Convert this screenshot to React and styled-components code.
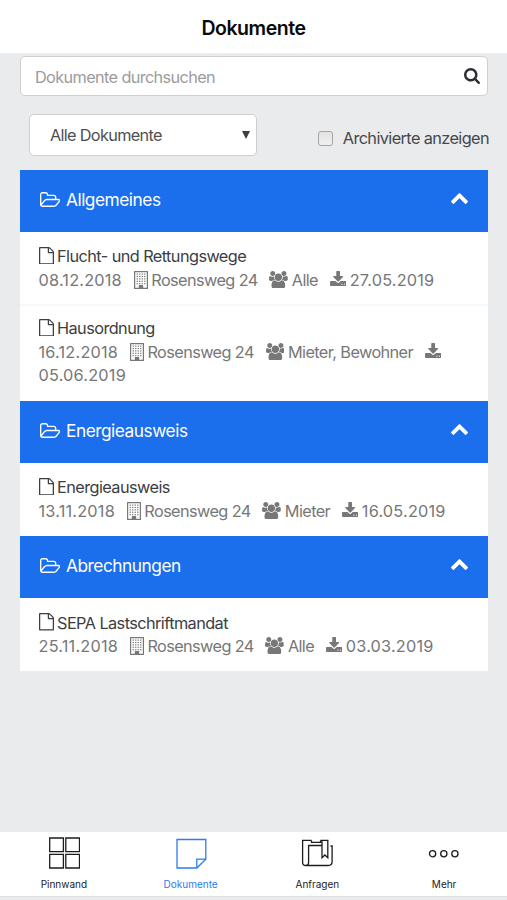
import React, { useState } from "react";
import styled, { createGlobalStyle } from "styled-components";

const groups = [
  {
    title: "Allgemeines",
    documents: [
      {
        title: "Flucht- und Rettungswege",
        created: "08.12.2018",
        building: "Rosensweg 24",
        audience: "Alle",
        downloaded: "27.05.2019"
      },
      {
        title: "Hausordnung",
        created: "16.12.2018",
        building: "Rosensweg 24",
        audience: "Mieter, Bewohner",
        downloaded: "05.06.2019"
      }
    ]
  },
  {
    title: "Energieausweis",
    documents: [
      {
        title: "Energieausweis",
        created: "13.11.2018",
        building: "Rosensweg 24",
        audience: "Mieter",
        downloaded: "16.05.2019"
      }
    ]
  },
  {
    title: "Abrechnungen",
    documents: [
      {
        title: "SEPA Lastschriftmandat",
        created: "25.11.2018",
        building: "Rosensweg 24",
        audience: "Alle",
        downloaded: "03.03.2019"
      }
    ]
  }
];

const SearchIcon = () => (
  <Glyph viewBox="64 128 1664 1664" $width={16} $height={16}>
    <path d="M1216 832q0-185-131.5-316.5t-316.5-131.5-316.5 131.5-131.5 316.5 131.5 316.5 316.5 131.5 316.5-131.5 131.5-316.5zm512 832q0 52-38 90t-90 38q-54 0-90-38l-343-342q-179 124-399 124-143 0-273.5-55.5t-225-150-150-225-55.5-273.5 55.5-273.5 150-225 225-150 273.5-55.5 273.5 55.5 225 150 150 225 55.5 273.5q0 220-124 399l343 343q37 37 37 90z" />
  </Glyph>
);

const FolderIcon = () => (
  <Glyph viewBox="64 128 1920 1408" $width={20.4} $height={15}>
    <path d="M1845 931q0-35-53-35h-1088q-40 0-85.5 21.5t-71.5 52.5l-294 363q-18 24-18 40 0 35 53 35h1088q40 0 86-22t71-53l294-363q18-22 18-39zm-1141-163h768v-160q0-40-28-68t-68-28h-576q-40 0-68-28t-28-68v-64q0-40-28-68t-68-28h-320q-40 0-68 28t-28 68v853l256-315q44-53 116-87.5t140-34.5zm1269 163q0 62-46 120l-295 363q-43 53-116 87.5t-140 34.5h-1088q-92 0-158-66t-66-158v-960q0-92 66-158t158-66h320q92 0 158 66t66 158v32h544q92 0 158 66t66 158v160h192q54 0 99 24.5t67 70.5q15 32 15 68z" />
  </Glyph>
);

const ChevronIcon = () => (
  <Glyph viewBox="90 480 1612 1036" $width={17} $height={11}>
    <path d="M1683 1331l-166 165q-19 19-45 19t-45-19l-531-531-531 531q-19 19-45 19t-45-19l-166-165q-19-19-19-45.5t19-45.5l742-741q19-19 45-19t45 19l742 741q19 19 19 45.5t-19 45.5z" />
  </Glyph>
);

const FileIcon = () => (
  <Glyph viewBox="128 0 1536 1792" $width={15} $height={17.5} $shift={-2}>
    <path d="M1596 380q28 28 48 76t20 88v1152q0 40-28 68t-68 28h-1344q-40 0-68-28t-28-68v-1600q0-40 28-68t68-28h896q40 0 88 20t76 48zm-444-244v376h376q-10-29-22-41l-313-313q-12-12-41-22zm384 1528v-1024h-416q-40 0-68-28t-28-68v-416h-768v1536h1280z" />
  </Glyph>
);

const BuildingIcon = () => (
  <Glyph viewBox="0 0 14 18" $width={14} $height={18} $shift={-3}>
    <path
      fillRule="evenodd"
      d="M.6 0h12.8q.6 0 .6.6v16.8q0 .6-.6.6H.6q-.6 0-.6-.6V.6Q0 0 .6 0zM1.2 1.2v15.6h3.6v-2.3q0-.4.4-.4h3.6q.4 0 .4.4v2.3h3.6V1.2z"
    />
    {[2.5, 4.9, 7.3, 9.7, 12.1].map(y =>
      [2.6, 5.1, 7.6, 10.1].map(x => (
        <rect key={`${x}-${y}`} x={x} y={y} width="1.3" height="1.2" />
      ))
    )}
  </Glyph>
);

const UsersIcon = () => (
  <Glyph viewBox="0 0 1920 1792" $width={18.7} $height={17.5} $shift={-2.5}>
    <path d="M593 896q-162 5-265 128h-134q-82 0-138-40.5t-56-118.5q0-353 124-353 6 0 43.5 21t97.5 42.5 119 21.5q67 0 133-23-5 37-5 66 0 159 93 288zm1071 637q0 120-73 189.5t-194 69.5h-874q-121 0-194-69.5t-73-189.5q0-53 3.5-103.5t14-109 26.5-108.5 43-97.5 62-81 85.5-53.5 111.5-20q10 0 43 21.5t73 48 107 48 135 21.5 135-21.5 107-48 73-48 43-21.5q61 0 111.5 20t85.5 53.5 62 81 43 97.5 26.5 108.5 14 109 3.5 103.5zm-1024-1277q0 106-75 181t-181 75-181-75-75-181 75-181 181-75 181 75 75 181zm704 384q0 159-112.5 271.5t-271.5 112.5-271.5-112.5-112.5-271.5 112.5-271.5 271.5-112.5 271.5 112.5 112.5 271.5zm576 225q0 78-56 118.5t-138 40.5h-134q-103-123-265-128 93-129 93-288 0-29-5-66 66 23 133 23 59 0 119-21.5t97.5-42.5 43.5-21q124 0 124 353zm-128-609q0 106-75 181t-181 75-181-75-75-181 75-181 181-75 181 75 75 181z" />
  </Glyph>
);

const DownloadIcon = () => (
  <Glyph viewBox="64 0 1664 1536" $width={16.3} $height={15} $shift={-0.5}>
    <path d="M1344 1344q0-26-19-45t-45-19-45 19-19 45 19 45 45 19 45-19 19-45zm256 0q0-26-19-45t-45-19-45 19-19 45 19 45 45 19 45-19 19-45zm128-224v320q0 40-28 68t-68 28h-1472q-40 0-68-28t-28-68v-320q0-40 28-68t68-28h465l135 136q58 56 136 56t136-56l136-136h464q40 0 68 28t28 68zm-325-569q17 41-14 70l-448 448q-18 19-45 19t-45-19l-448-448q-31-29-14-70 17-39 59-39h256v-448q0-26 19-45t45-19h256q26 0 45 19t19 45v448h256q42 0 59 39z" />
  </Glyph>
);

const BoardIcon = () => (
  <TabIcon viewBox="0 0 32 32">
    <path d="M1.7 1h13.7v13.7H1.7zM17.8 1h13.7v13.7H17.8zM1.7 17.3h13.7V31H1.7zM17.8 17.3h13.7V31H17.8z" />
  </TabIcon>
);

const NoteIcon = () => (
  <TabIcon viewBox="0 0 32 32">
    <path d="M2 2.5h28.8v19.7l-9 8.8H2zM21.8 31v-8.8h9" />
  </TabIcon>
);

const BookIcon = () => (
  <TabIcon viewBox="0 0 32 32">
    <path d="M10.5 3.4H1.6v21.8q0 3.3 3.3 3.3h22.2q4 0 4-4V9h-1.6M4.9 28.5q2.7 0 2.7-3V8.5h13.5M10.5 3.4v2h9v-2M21 3.4v17.3l2.9-2.7 2.9 2.7V3.4h-7.3" />
  </TabIcon>
);

const MoreIcon = () => (
  <TabIcon viewBox="0 0 32 32">
    <circle cx="4.6" cy="16.7" r="3.1" />
    <circle cx="15.8" cy="16.7" r="3.1" />
    <circle cx="26.9" cy="16.7" r="3.1" />
  </TabIcon>
);

const tabs = [
  { label: "Pinnwand", icon: BoardIcon },
  { label: "Dokumente", icon: NoteIcon },
  { label: "Anfragen", icon: BookIcon },
  { label: "Mehr", icon: MoreIcon }
];

const Document = ({ title, created, building, audience, downloaded }) => (
  <Item>
    <ItemTitle>
      <FileIcon /> {title}
    </ItemTitle>
    <Meta>
      <MetaDate>{created}</MetaDate> <BuildingIcon />{" "}
      <MetaText>{building}</MetaText> <UsersIcon />{" "}
      <MetaText>{audience}</MetaText> <DownloadIcon />{" "}
      <MetaDate>{downloaded}</MetaDate>
    </Meta>
  </Item>
);

const Group = ({ title, documents }) => {
  const [open, setOpen] = useState(true);
  return (
    <section>
      <GroupHeader onClick={() => setOpen(!open)}>
        <FolderIcon />
        <GroupTitle>{title}</GroupTitle>
        <Chevron $open={open}>
          <ChevronIcon />
        </Chevron>
      </GroupHeader>
      {open && documents.map(doc => <Document key={doc.title} {...doc} />)}
    </section>
  );
};

const App = () => {
  const [active, setActive] = useState("Dokumente");
  return (
    <Screen>
      <GlobalStyle />
      <Header>Dokumente</Header>
      <Content>
        <SearchBox>
          <SearchInput placeholder="Dokumente durchsuchen" />
          <SearchIcon />
        </SearchBox>
        <Filters>
          <Select>
            Alle Dokumente
            <Arrow />
          </Select>
          <CheckLabel>
            <Checkbox type="checkbox" />
            Archivierte anzeigen
          </CheckLabel>
        </Filters>
        {groups.map(group => (
          <Group key={group.title} {...group} />
        ))}
      </Content>
      <TabBar>
        {tabs.map(({ label, icon: Icon }) => (
          <Tab
            key={label}
            $active={label === active}
            onClick={() => setActive(label)}
          >
            <Icon />
            {label}
          </Tab>
        ))}
      </TabBar>
    </Screen>
  );
};

export default App;

const GlobalStyle = createGlobalStyle`
  * {
    box-sizing: border-box;
  }
  body {
    margin: 0;
    font-family: Inter, "Liberation Sans", sans-serif;
    background: #e9ebed;
  }
`;

const Glyph = styled.svg`
  flex: none;
  width: ${props => props.$width}px;
  height: ${props => props.$height}px;
  vertical-align: ${props => props.$shift || 0}px;
  fill: currentColor;
`;

const Screen = styled.div`
  display: flex;
  flex-direction: column;
  height: 900px;
  padding-bottom: 3px;
  overflow: hidden;
`;
const Header = styled.header`
  flex: none;
  height: 53px;
  padding-top: 3px;
  background: #fff;
  color: #0a0a0a;
  font-size: 19.5px;
  font-weight: 600;
  line-height: 51px;
  letter-spacing: -0.45px;
  text-align: center;
`;
const Content = styled.main`
  flex: 1;
  padding: 3px 19px 0 20px;
`;

const SearchBox = styled.div`
  display: flex;
  align-items: center;
  height: 40px;
  padding: 0 7px 0 14px;
  background: #fff;
  border: 1px solid #ccced0;
  border-radius: 5px;
  color: #2c2f33;
`;
const SearchInput = styled.input`
  flex: 1;
  min-width: 0;
  padding: 2px 0 0;
  border: 0;
  outline: 0;
  background: none;
  font: 400 16.3px Inter, "Liberation Sans", sans-serif;
  letter-spacing: -0.63px;

  &::placeholder {
    color: #9b9b9b;
  }
`;

const Filters = styled.div`
  display: flex;
  height: 73.5px;
  padding: 18px 0 0 9px;
`;
const Select = styled.div`
  display: flex;
  align-items: center;
  justify-content: space-between;
  width: 228px;
  height: 42px;
  padding: 0 6px 0 20px;
  background: #fff;
  border: 1px solid #ccced0;
  border-radius: 5px;
  color: #4d4f52;
  font-size: 16.3px;
  letter-spacing: -0.68px;
`;
const Arrow = styled.span`
  border: 4px solid transparent;
  border-top: 8px solid #3c3e40;
  border-bottom: 0;
`;
const CheckLabel = styled.label`
  display: flex;
  align-items: center;
  height: 48px;
  margin-left: auto;
  margin-right: -1px;
  color: #45484c;
  font-size: 16.3px;
  letter-spacing: -0.6px;
  white-space: nowrap;
`;
const Checkbox = styled.input`
  appearance: none;
  width: 15px;
  height: 15px;
  margin: 1px 10px 0 0;
  background: linear-gradient(#e2e2e2, #f0f0f0);
  border: 1px solid #a6a6a6;
  border-radius: 3px;
`;

const GroupHeader = styled.header`
  display: flex;
  align-items: center;
  height: 62px;
  margin-right: 0.5px;
  padding: 0 20px 2px;
  background: #1b6eec;
  color: #fff;
`;
const GroupTitle = styled.h2`
  flex: 1;
  margin: 0 0 0 5.6px;
  font-size: 17.3px;
  font-weight: 400;
  letter-spacing: -0.47px;
`;
const Chevron = styled.span`
  display: flex;
  margin-top: -2px;
  transform: ${props => (props.$open ? "none" : "rotate(180deg)")};
`;

const Item = styled.article`
  margin-right: 0.5px;
  padding: 13.6px 19px 11.9px 18.5px;
  background: #fff;
  font-size: 16.3px;
  line-height: 23.4px;

  & + & {
    padding-top: 11.5px;
    border-top: 2px solid #f6f8f9;
  }
  &:last-child {
    padding-bottom: 13px;
  }
`;
const ItemTitle = styled.div`
  color: #3b3e42;
  letter-spacing: -0.57px;

  ${Glyph} {
    margin-right: -0.5px;
  }
`;
const Meta = styled.div`
  color: #777;

  ${Glyph} {
    margin-left: 7.1px;
    margin-right: -0.9px;
  }
`;
const MetaText = styled.span`
  letter-spacing: -0.6px;
`;
const MetaDate = styled.span`
  letter-spacing: 0.2px;
`;

const TabBar = styled.nav`
  display: flex;
  flex: none;
  height: 65px;
  background: #fff;
  border-bottom: 1px solid #dedfe1;
`;
const Tab = styled.button`
  display: flex;
  flex: 1;
  flex-direction: column;
  align-items: center;
  padding: 5px 0 0 1px;
  border: 0;
  background: none;
  color: ${props => (props.$active ? "#2f7bef" : "#1c1c1c")};
  font: 400 10px/14px Inter, "Liberation Sans", sans-serif;
`;
const TabIcon = styled.svg`
  width: 32px;
  height: 32px;
  margin-bottom: 8px;
  fill: none;
  stroke: currentColor;
  stroke-width: 1.3px;
`;
